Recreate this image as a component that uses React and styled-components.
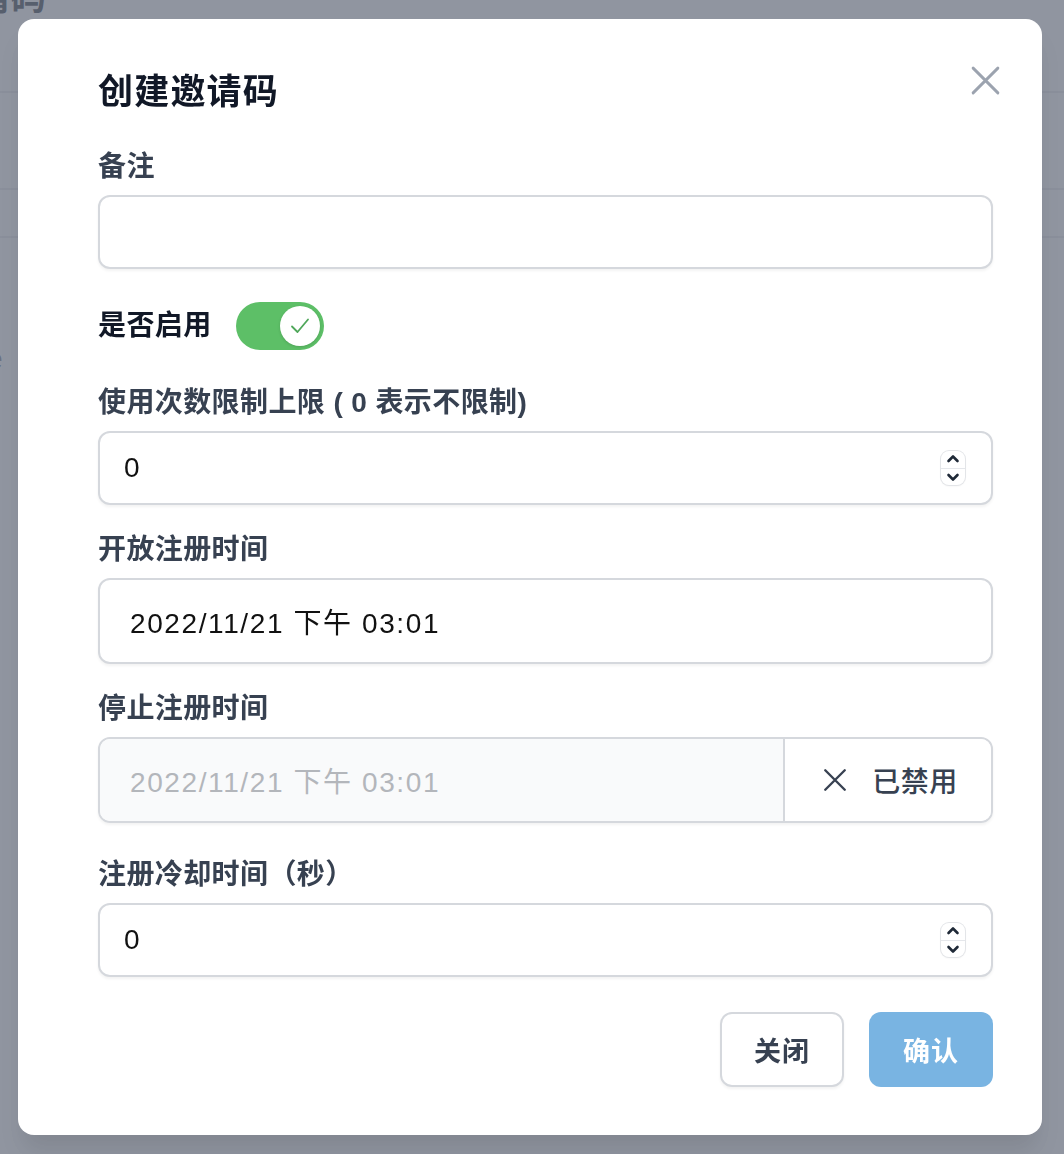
import React from "react";
import styled, { createGlobalStyle } from "styled-components";

const Global = createGlobalStyle`
  html, body { margin: 0; padding: 0; background: #ffffff; }
  body { font-family: "Liberation Sans", "Noto Sans CJK SC", sans-serif; }
  * { box-sizing: border-box; }
`;

const Page = styled.div`
  width: 1064px;
  height: 1154px;
  overflow: hidden;
  background: #ffffff;
`;

const PageHeader = styled.div`
  height: 93px;
  border-bottom: 2px solid #e5e7eb;
  overflow: hidden;
`;

const PageTitle = styled.h1`
  margin: -30px 0 0 -62px;
  font-family: "Noto Sans CJK SC", sans-serif;
  font-size: 36px;
  font-weight: 700;
  line-height: 48px;
  color: #1f2937;
`;

const PageRow = styled.div`
  height: ${(p) => p.$h}px;
  border-bottom: 2px solid #e5e7eb;
`;

const PageText = styled.div`
  padding-top: 104px;
  margin-left: -14px;
  font-size: 30px;
  color: #6b7280;
`;

const Overlay = styled.div`
  position: fixed;
  inset: 0;
  background: rgba(107, 114, 128, 0.75);
  display: flex;
  align-items: flex-start;
  padding: 19px 0 0 18px;
`;

const Modal = styled.div`
  width: 1024px;
  height: 1116px;
  background: #ffffff;
  border-radius: 16px;
  padding: 46px 49px 49px 80px;
  display: flex;
  flex-direction: column;
  box-shadow: 0 20px 25px -5px rgba(0, 0, 0, 0.1);
`;

const HeaderRow = styled.div`
  display: flex;
  justify-content: space-between;
  align-items: flex-start;
`;

const Title = styled.h2`
  margin: 0;
  font-family: "Noto Sans CJK SC", sans-serif;
  font-size: 35px;
  font-weight: 700;
  line-height: 48px;
  color: #111827;
  letter-spacing: 1.2px;
`;

const CloseButton = styled.button`
  border: none;
  background: none;
  padding: 0;
  margin: -3px -10px 0 0;
  width: 36px;
  height: 36px;
  display: flex;
  align-items: center;
  justify-content: center;
  cursor: pointer;
  color: #9ca3af;
`;

const Field = styled.div`
  display: flex;
  flex-direction: column;
  gap: 8px;
  margin-top: ${(p) => p.$mt}px;
`;

const Label = styled.label`
  font-family: "Liberation Sans", "Noto Sans CJK SC", sans-serif;
  font-size: 28px;
  font-weight: 600;
  line-height: 40px;
  color: #374151;
  letter-spacing: 0.4px;
`;

const InputBox = styled.div`
  flex: none;
  height: ${(p) => p.$h}px;
  border: 2px solid #d5d8dd;
  border-radius: 12px;
  background: #ffffff;
  box-shadow: 0 2px 3px rgba(0, 0, 0, 0.05);
  display: flex;
  align-items: center;
  padding: 0 26px 0 ${(p) => p.$pl}px;
  font-family: "Liberation Sans", "Noto Sans CJK SC", sans-serif;
  font-size: 28px;
  color: #111111;
  letter-spacing: ${(p) => p.$ls || 0}px;
`;

const InputValue = styled.span`
  flex: 1;
`;

const Spinner = styled.div`
  width: 24px;
  height: 34px;
  border-radius: 8px;
  background: #ffffff;
  box-shadow: 0 0 0 1px #e3e5e8, 0 1px 2px rgba(0, 0, 0, 0.08);
  display: flex;
  flex-direction: column;
  align-items: center;
  justify-content: space-between;
  padding: 3px 0;
`;

const SpinDivider = styled.div`
  width: 100%;
  height: 1px;
  background: #e5e7eb;
`;

const ToggleRow = styled.div`
  display: flex;
  align-items: center;
  gap: 24px;
  margin-top: 33px;
  height: 48px;
`;

const ToggleLabel = styled(Label)`
  font-weight: 700;
  color: #111827;
`;

const Toggle = styled.div`
  width: 88px;
  height: 48px;
  border-radius: 24px;
  background: #5dbf67;
  display: flex;
  align-items: center;
  justify-content: flex-end;
  padding: 0 4px;
`;

const Knob = styled.div`
  width: 40px;
  height: 40px;
  border-radius: 50%;
  background: #ffffff;
  display: flex;
  align-items: center;
  justify-content: center;
  box-shadow: 0 1px 3px rgba(0, 0, 0, 0.15);
`;

const Group = styled.div`
  flex: none;
  height: 86px;
  display: flex;
  border: 2px solid #d5d8dd;
  border-radius: 12px;
  overflow: hidden;
  box-shadow: 0 2px 3px rgba(0, 0, 0, 0.05);
`;

const DisabledValue = styled.div`
  flex: 1;
  background: #f9fafb;
  display: flex;
  align-items: center;
  padding-left: 30px;
  font-size: 28px;
  letter-spacing: 1.6px;
  color: #b3b6bb;
`;

const GroupButton = styled.button`
  width: 208px;
  border: none;
  border-left: 2px solid #d5d8dd;
  background: #ffffff;
  display: flex;
  align-items: center;
  justify-content: center;
  gap: 24px;
  padding: 0 0 0 4px;
  font-family: "Noto Sans CJK SC", sans-serif;
  font-size: 28px;
  font-weight: 500;
  color: #374151;
  letter-spacing: 0.5px;
`;

const Footer = styled.div`
  display: flex;
  justify-content: flex-end;
  gap: 25px;
  margin-top: 35px;
`;

const Button = styled.button`
  width: 124px;
  height: 75px;
  border-radius: 12px;
  font-family: "Noto Sans CJK SC", sans-serif;
  font-size: 27px;
  font-weight: 700;
  border: ${(p) => (p.$primary ? "none" : "2px solid #d5d8dd")};
  background: ${(p) => (p.$primary ? "#79b4e2" : "#ffffff")};
  color: ${(p) => (p.$primary ? "#ffffff" : "#374151")};
  box-shadow: ${(p) => (p.$primary ? "none" : "0 2px 3px rgba(0,0,0,0.05)")};
  letter-spacing: 1px;
`;

const Chevron = ({ up }) => (
  <svg width="14" height="9" viewBox="0 0 14 9" fill="none">
    <path
      d={up ? "M2.5 7L7 2.5L11.5 7" : "M2.5 2L7 6.5L11.5 2"}
      stroke="#1f2937"
      strokeWidth="2.6"
      strokeLinecap="round"
      strokeLinejoin="round"
    />
  </svg>
);

const NumberSpinner = () => (
  <Spinner>
    <Chevron up />
    <SpinDivider />
    <Chevron />
  </Spinner>
);

const XIcon = ({ size, color, width }) => (
  <svg width={size} height={size} viewBox="0 0 24 24" fill="none">
    <path d="M3 3L21 21M21 3L3 21" stroke={color} strokeWidth={width} strokeLinecap="round" />
  </svg>
);

export default function App() {
  return (
    <>
      <Global />
      <Page>
        <PageHeader>
          <PageTitle>邀请码</PageTitle>
        </PageHeader>
        <PageRow $h={97} />
        <PageRow $h={48} />
        <PageText>e</PageText>
      </Page>
      <Overlay>
        <Modal>
          <HeaderRow>
            <Title>创建邀请码</Title>
            <CloseButton aria-label="关闭">
              <XIcon size={33} color="#9ca3af" width={2.1} />
            </CloseButton>
          </HeaderRow>

          <Field $mt={34}>
            <Label>备注</Label>
            <InputBox $h={74} $pl={24} />
          </Field>

          <ToggleRow>
            <ToggleLabel>是否启用</ToggleLabel>
            <Toggle>
              <Knob>
                <svg width="20" height="18" viewBox="0 0 20 18" fill="none">
                  <path d="M2 9.5L7.5 15L18 2.5" stroke="#4fa75a" strokeWidth="1.8" strokeLinecap="round" strokeLinejoin="round" />
                </svg>
              </Knob>
            </Toggle>
          </ToggleRow>

          <Field $mt={33}>
            <Label>使用次数限制上限 ( 0 表示不限制)</Label>
            <InputBox $h={74} $pl={24}>
              <InputValue>0</InputValue>
              <NumberSpinner />
            </InputBox>
          </Field>

          <Field $mt={25}>
            <Label>开放注册时间</Label>
            <InputBox $h={86} $pl={30} $ls={1.6}>
              <InputValue>2022/11/21 下午 03:01</InputValue>
            </InputBox>
          </Field>

          <Field $mt={25}>
            <Label>停止注册时间</Label>
            <Group>
              <DisabledValue>2022/11/21 下午 03:01</DisabledValue>
              <GroupButton>
                <XIcon size={26} color="#374151" width={2.2} />
                已禁用
              </GroupButton>
            </Group>
          </Field>

          <Field $mt={32}>
            <Label>注册冷却时间（秒）</Label>
            <InputBox $h={74} $pl={24}>
              <InputValue>0</InputValue>
              <NumberSpinner />
            </InputBox>
          </Field>

          <Footer>
            <Button>关闭</Button>
            <Button $primary>确认</Button>
          </Footer>
        </Modal>
      </Overlay>
    </>
  );
}
